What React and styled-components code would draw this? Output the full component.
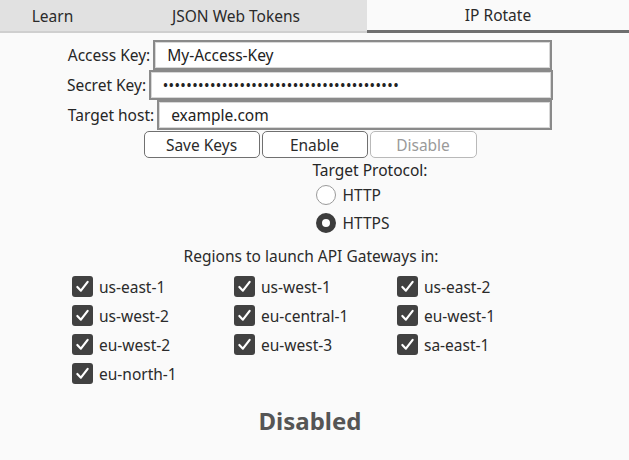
import React from 'react'
import styled, { createGlobalStyle } from 'styled-components'

const GlobalStyle = createGlobalStyle`
  body {
    margin: 0;
    padding: 0;
    background: #fafafa;
    font-family: "Noto Sans", "Open Sans", sans-serif;
    color: #2b2b2b;
  }
`

const Page = styled.div`
  width: 629px;
  height: 460px;
  background: #fafafa;
  overflow: hidden;
`

const TabBar = styled.div`
  display: flex;
  height: 31px;
  background: #e1e1e1;
  border-bottom: 2px solid #cfcfcf;
`

const Tab = styled.div`
  width: ${p => p.w}px;
  display: flex;
  align-items: center;
  justify-content: center;
  font-size: 15.5px;
  color: #2a2a2a;
  background: ${p => (p.active ? '#fafafa' : 'transparent')};
  border-bottom: ${p => (p.active ? '3px solid #6e6e6e' : 'none')};
  margin-bottom: ${p => (p.active ? '-2px' : '0')};
  box-sizing: border-box;
`

const Main = styled.div`
  width: 620px;
  display: flex;
  flex-direction: column;
  align-items: center;
  padding-top: 7px;
`

const Row = styled.div`
  display: flex;
  align-items: center;
  gap: 3px;
  height: 30px;
`

const Label = styled.span`
  font-size: 15.5px;
  color: #262626;
`

const Field = styled.div`
  width: ${p => p.w}px;
  height: 30px;
  box-sizing: border-box;
  border: 2px solid #8a8a8a;
  box-shadow: inset 0 0 0 1px #d8d8d8;
  background: #fff;
  display: flex;
  align-items: center;
  padding-left: 12px;
  font-size: 15.5px;
  color: #222;
`

const Dots = styled.span`
  font-size: 12px;
  letter-spacing: 1.4px;
  font-weight: bold;
`

const Buttons = styled.div`
  display: flex;
  gap: 2px;
  margin-top: 1px;
`

const Button = styled.div`
  width: ${p => p.w}px;
  height: 27px;
  box-sizing: border-box;
  border: 1px solid ${p => (p.disabled ? '#b9b9b9' : '#707070')};
  border-radius: 5px;
  background: #fff;
  display: flex;
  align-items: center;
  justify-content: center;
  font-size: 15.5px;
  color: ${p => (p.disabled ? '#9a9a9a' : '#2b2b2b')};
`

const Protocol = styled.div`
  display: flex;
  flex-direction: column;
  margin-left: 120px;
  margin-top: 1px;
`

const RadioRow = styled.div`
  display: flex;
  align-items: center;
  gap: 6px;
  height: 28px;
  font-size: 15.5px;
  margin-left: 4px;
`

const Radio = styled.span`
  width: 20px;
  height: 20px;
  box-sizing: border-box;
  border-radius: 50%;
  background: #fff;
  border: ${p => (p.checked ? '6px solid #3c3c3c' : '1px solid #9a9a9a')};
`

const Heading = styled.div`
  font-size: 15.5px;
  margin-top: 8px;
  margin-left: 2px;
`

const Grid = styled.div`
  display: grid;
  grid-template-columns: 162px 163px 110px;
  grid-auto-rows: 29px;
  align-items: center;
  margin-top: 5px;
  margin-left: -41px;
`

const Check = styled.label`
  display: flex;
  align-items: center;
  gap: 6px;
  font-size: 15.5px;
  color: #2b2b2b;
`

const Box = styled.span`
  width: 21px;
  height: 21px;
  border-radius: 3px;
  background: #414141;
  display: flex;
  align-items: center;
  justify-content: center;
`

const Status = styled.div`
  font-size: 24px;
  font-weight: bold;
  color: #555;
  margin-top: 16px;
`

const regions = [
  'us-east-1', 'us-west-1', 'us-east-2',
  'us-west-2', 'eu-central-1', 'eu-west-1',
  'eu-west-2', 'eu-west-3', 'sa-east-1',
  'eu-north-1',
]

const Tick = () => (
  <svg width="15" height="15" viewBox="0 0 16 16">
    <path d="M2.5 8.5 L6.3 12.5 L13.5 3" fill="none" stroke="#fff" strokeWidth="2.3" strokeLinecap="round" strokeLinejoin="round" />
  </svg>
)

export default function App() {
  return (
    <Page>
      <GlobalStyle />
      <TabBar>
        <Tab w={105}>Learn</Tab>
        <Tab w={262}>JSON Web Tokens</Tab>
        <Tab w={262} active>IP Rotate</Tab>
      </TabBar>
      <Main>
        <Row>
          <Label>Access Key:</Label>
          <Field w={399}>My-Access-Key</Field>
        </Row>
        <Row>
          <Label>Secret Key:</Label>
          <Field w={404}><Dots>{'•'.repeat(40)}</Dots></Field>
        </Row>
        <Row>
          <Label>Target host:</Label>
          <Field w={395}>example.com</Field>
        </Row>
        <Buttons>
          <Button w={116}>Save Keys</Button>
          <Button w={106}>Enable</Button>
          <Button w={107} disabled>Disable</Button>
        </Buttons>
        <Protocol>
          <Label>Target Protocol:</Label>
          <RadioRow><Radio />HTTP</RadioRow>
          <RadioRow><Radio checked />HTTPS</RadioRow>
        </Protocol>
        <Heading>Regions to launch API Gateways in:</Heading>
        <Grid>
          {regions.map(r => (
            <Check key={r}>
              <Box><Tick /></Box>
              {r}
            </Check>
          ))}
        </Grid>
        <Status>Disabled</Status>
      </Main>
    </Page>
  )
}
